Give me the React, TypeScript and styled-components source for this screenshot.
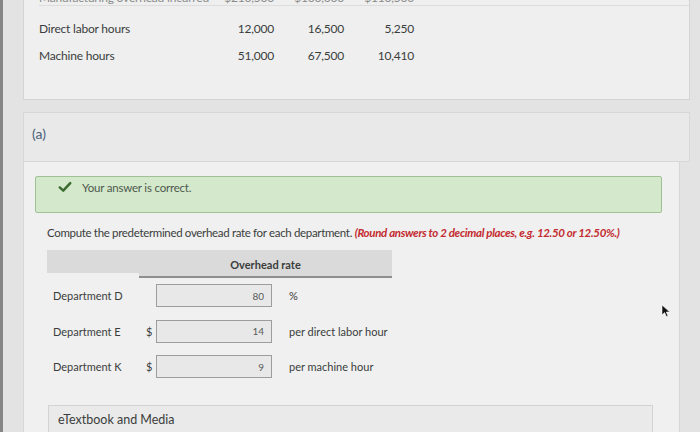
import React from "react";
import styled, { createGlobalStyle } from "styled-components";

const GlobalStyle = createGlobalStyle`
    html, body {
        margin: 0;
        padding: 0;
        height: 432px;
        overflow: hidden;
    }
    body {
        background: #e2e3e2;
        font-family: Lato, "Open Sans", sans-serif;
        color: #3b3d3d;
    }
`;

interface DataRow {
    label: string;
    values: string[];
}

const dataRows: DataRow[] = [
    { label: "Manufacturing overhead incurred", values: ["$210,500", "$100,000", "$110,500"] },
    { label: "Direct labor hours", values: ["12,000", "16,500", "5,250"] },
    { label: "Machine hours", values: ["51,000", "67,500", "10,410"] }
];

interface RateRow {
    dept: string;
    prefix: string;
    value: string;
    unit: string;
}

const rateRows: RateRow[] = [
    { dept: "Department D", prefix: "", value: "80", unit: "%" },
    { dept: "Department E", prefix: "$", value: "14", unit: "per direct labor hour" },
    { dept: "Department K", prefix: "$", value: "9", unit: "per machine hour" }
];

const App = () => {
    return (
        <>
            <GlobalStyle />
            <Page>
                <DataPanel>
                    {dataRows.map((row, i) => (
                        <DataLine key={row.label} $cut={i === 0}>
                            <DataLabel>{row.label}</DataLabel>
                            {row.values.map((v) => (
                                <DataValue key={v}>{v}</DataValue>
                            ))}
                        </DataLine>
                    ))}
                </DataPanel>

                <SectionHead>(a)</SectionHead>

                <SectionBody>
                    <CorrectBox>
                        <CheckIcon viewBox="0 0 16 16">
                            <path
                                d="M2 8.5 L6 12.2 L14 3.5"
                                fill="none"
                                stroke="#3c6b31"
                                strokeWidth="2.8"
                                strokeLinecap="round"
                                strokeLinejoin="round"
                            />
                        </CheckIcon>
                        <CorrectText>Your answer is correct.</CorrectText>
                    </CorrectBox>

                    <Instruction>
                        Compute the predetermined overhead rate for each department.{" "}
                        <Hint>(Round answers to 2 decimal places, e.g. 12.50 or 12.50%.)</Hint>
                    </Instruction>

                    <RateTable>
                        <HeadRow>
                            <HeadBlank />
                            <HeadCell>Overhead rate</HeadCell>
                        </HeadRow>
                        {rateRows.map((row) => (
                            <RateLine key={row.dept}>
                                <DeptLabel>{row.dept}</DeptLabel>
                                <Prefix>{row.prefix}</Prefix>
                                <RateInput readOnly value={row.value} />
                                <Unit>{row.unit}</Unit>
                            </RateLine>
                        ))}
                    </RateTable>

                    <MediaPanel>eTextbook and Media</MediaPanel>
                </SectionBody>

                <Cursor viewBox="0 0 10 14">
                    <path d="M1 1 L1 11 L3.6 8.6 L5.4 12.6 L7 11.9 L5.3 8 L8.8 8 Z" fill="#111" stroke="#fff" strokeWidth="0.6" />
                </Cursor>
            </Page>
        </>
    );
};

export default App;

const Page = styled.div`
    position: relative;
    height: 432px;
    box-sizing: border-box;
    border-left: 3px solid #858685;
    padding: 0 10px 0 20px;
    overflow: hidden;
`;

const DataPanel = styled.div`
    margin-top: -12px;
    height: 112px;
    box-sizing: border-box;
    background: #eeefee;
    border: 1px solid #d3d4d3;
    padding: 0 0 0 15px;
`;

const DataLine = styled.div<{ $cut?: boolean }>`
    display: grid;
    grid-template-columns: 160px 75px 70px 70px;
    align-items: center;
    height: ${(p) => (p.$cut ? "16px" : "27px")};
    margin-bottom: ${(p) => (p.$cut ? "9px" : "0")};
    white-space: nowrap;
    font-size: 12px;
    color: ${(p) => (p.$cut ? "#8a8b8b" : "#3b3d3d")};
    border-bottom: ${(p) => (p.$cut ? "1px solid #dcdddc" : "none")};
`;

const DataLabel = styled.span`
    letter-spacing: -0.2px;
`;

const DataValue = styled.span`
    text-align: right;
    letter-spacing: -0.2px;
`;

const SectionHead = styled.div`
    margin-top: 12px;
    height: 50px;
    box-sizing: border-box;
    background: #e8e9e8;
    border: 1px solid #d6d7d6;
    padding: 12px 0 0 8px;
    font-size: 14px;
    color: #4a5f7a;
`;

const SectionBody = styled.div`
    margin-right: 10px;
    height: 280px;
    box-sizing: border-box;
    background: #eff0ef;
    border-left: 1px solid #d6d7d6;
    border-right: 1px solid #d6d7d6;
    padding: 14px 17px 0 11px;
`;

const CorrectBox = styled.div`
    display: flex;
    align-items: flex-start;
    gap: 10px;
    height: 37px;
    box-sizing: border-box;
    background: #d4e8cc;
    border: 1px solid #9fc195;
    border-radius: 2px;
    padding: 3px 0 0 22px;
`;

const CheckIcon = styled.svg`
    width: 14px;
    height: 14px;
    margin-top: 0;
`;

const CorrectText = styled.span`
    font-size: 11.5px;
    line-height: 16px;
    color: #4d5a4c;
    letter-spacing: -0.2px;
`;

const Instruction = styled.div`
    margin: 13px 0 0 12px;
    font-size: 11.5px;
    letter-spacing: -0.33px;
    white-space: nowrap;
    color: #3b3d3d;
`;

const Hint = styled.span`
    color: #c42a2f;
    font-weight: 700;
    font-style: italic;
`;

const RateTable = styled.div`
    margin: 11px 0 0 12px;
    width: 345px;
`;

const HeadRow = styled.div`
    display: flex;
    align-items: flex-start;
    height: 28px;
`;

const HeadBlank = styled.div`
    width: 92px;
    height: 23px;
    background: #d9dad9;
`;

const HeadCell = styled.div`
    flex: 1;
    height: 28px;
    box-sizing: border-box;
    background: #d9dad9;
    border-bottom: 2px solid #8d8f8f;
    text-align: center;
    padding-top: 8px;
    font-size: 11px;
    font-weight: 700;
    color: #3b3d3d;
`;

const RateLine = styled.div`
    display: flex;
    align-items: center;
    height: 35.5px;
    padding-left: 6px;
`;

const DeptLabel = styled.span`
    width: 93px;
    font-size: 11px;
    color: #3b3d3d;
`;

const Prefix = styled.span`
    width: 10px;
    font-size: 11px;
    color: #3b3d3d;
`;

const RateInput = styled.input`
    width: 116px;
    height: 23px;
    box-sizing: border-box;
    margin: 0;
    background: #e7e8e7;
    border: 1px solid #9c9d9c;
    border-radius: 0;
    padding: 0 7px 0 0;
    text-align: right;
    font-family: Lato, "Open Sans", sans-serif;
    font-size: 10px;
    color: #5a5c5c;
    outline: none;
`;

const Unit = styled.span`
    margin-left: 17px;
    font-size: 11px;
    color: #3b3d3d;
`;

const MediaPanel = styled.div`
    margin: 20px 9px 0 13px;
    height: 40px;
    box-sizing: border-box;
    background: #e9eae9;
    border: 1px solid #d2d3d2;
    padding: 6px 0 0 9px;
    font-size: 12.5px;
    color: #3b3d3d;
`;

const Cursor = styled.svg`
    position: absolute;
    left: 658px;
    top: 304px;
    width: 10px;
    height: 14px;
`;
